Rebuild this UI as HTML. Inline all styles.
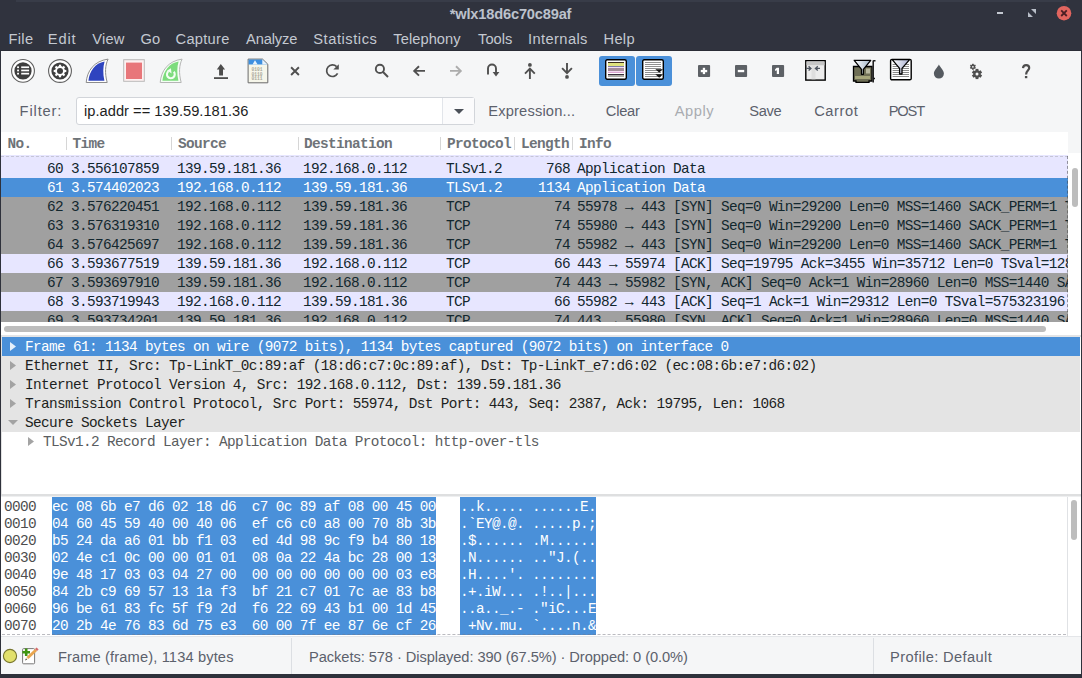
<!DOCTYPE html><html><head><meta charset="utf-8"><title>wlx18d6c70c89af</title><style>
*{margin:0;padding:0;box-sizing:border-box}
html,body{width:1082px;height:678px;overflow:hidden}
body{position:relative;background:#f5f6f7;font-family:"Liberation Sans", sans-serif;}
.a{position:absolute}
.t{position:absolute;white-space:pre;line-height:1}
.m{font-family:"Liberation Mono", monospace;font-size:14.4px;letter-spacing:-0.641px;white-space:pre}
.menu{position:absolute;top:33px;font-size:14.67px;color:#cfd4db;white-space:pre;line-height:1}
.fb{position:absolute;top:104px;font-size:14.67px;color:#5c616c;white-space:pre;line-height:1}
.row{position:absolute;left:1px;width:1067px;height:19px;overflow:hidden;color:#12272e}
.row span{position:absolute;top:3px;font-family:"Liberation Mono", monospace;font-size:14.4px;letter-spacing:-0.641px;white-space:pre;line-height:1}
.hdr span{position:absolute;top:137px;font-family:"Liberation Mono", monospace;font-size:14.4px;letter-spacing:-0.641px;font-weight:bold;color:#6e7378;white-space:pre;line-height:1}
.sep{position:absolute;top:137px;width:1px;height:13px;background:#d6d6d6}
.tr{position:absolute;left:2px;width:1078px;height:19px;color:#1d1f21}
.tr span{position:absolute;top:3px;font-family:"Liberation Mono", monospace;font-size:14.4px;letter-spacing:-0.641px;white-space:pre;line-height:1}
.bl{position:absolute;left:4px;font-family:"Liberation Mono", monospace;font-size:14.4px;letter-spacing:-0.641px;white-space:pre;line-height:1;color:#4d4d4d}
.st{position:absolute;top:650px;font-size:14.67px;color:#5c616c;white-space:pre;line-height:1}
</style></head><body>
<div class="a" style="left:0;top:0;width:1082px;height:51px;background:#30333e"></div>
<div class="a" style="left:16px;top:0;width:1050px;height:2px;background:#383c48"></div>
<div class="a" style="left:0;top:50px;width:1082px;height:1px;background:#2a2d36"></div>
<div class="t" style="left:449.80px;top:6.70px;font-size:14.67px;font-weight:bold;color:#bcc2cc;letter-spacing:-0.200px;">*wlx18d6c70c89af</div>
<div class="a" style="left:997px;top:12px;width:6px;height:2px;background:#c3c8d0"></div>
<svg class="a" style="left:1028px;top:9px" width="8" height="8" viewBox="0 0 8 8"><path d="M3 0H8V5Z M0 3V8H5Z" fill="#b8bec8"/></svg>
<svg class="a" style="left:1056px;top:5px" width="16" height="16" viewBox="0 0 16 16"><circle cx="8" cy="8.2" r="7.3" fill="#e1655f"/><path d="M5.2 5.4L10.8 11M10.8 5.4L5.2 11" stroke="#4a1f24" stroke-width="1.8"/></svg>
<div class="t" style="left:8.50px;top:31.70px;font-size:14.67px;font-weight:normal;color:#c4c9d1;letter-spacing:0.333px;">File</div>
<div class="t" style="left:47.80px;top:31.70px;font-size:14.67px;font-weight:normal;color:#c4c9d1;letter-spacing:0.867px;">Edit</div>
<div class="t" style="left:92.30px;top:31.70px;font-size:14.67px;font-weight:normal;color:#c4c9d1;letter-spacing:0.167px;">View</div>
<div class="t" style="left:140.40px;top:31.70px;font-size:14.67px;font-weight:normal;color:#c4c9d1;letter-spacing:0.300px;">Go</div>
<div class="t" style="left:175.60px;top:31.70px;font-size:14.67px;font-weight:normal;color:#c4c9d1;letter-spacing:0.267px;">Capture</div>
<div class="t" style="left:246.00px;top:31.70px;font-size:14.67px;font-weight:normal;color:#c4c9d1;letter-spacing:-0.133px;">Analyze</div>
<div class="t" style="left:313.30px;top:31.70px;font-size:14.67px;font-weight:normal;color:#c4c9d1;letter-spacing:0.544px;">Statistics</div>
<div class="t" style="left:393.30px;top:31.70px;font-size:14.67px;font-weight:normal;color:#c4c9d1;letter-spacing:0.062px;">Telephony</div>
<div class="t" style="left:478.10px;top:31.70px;font-size:14.67px;font-weight:normal;color:#c4c9d1;letter-spacing:-0.025px;">Tools</div>
<div class="t" style="left:528.00px;top:31.70px;font-size:14.67px;font-weight:normal;color:#c4c9d1;letter-spacing:0.400px;">Internals</div>
<div class="t" style="left:603.50px;top:31.70px;font-size:14.67px;font-weight:normal;color:#c4c9d1;letter-spacing:0.300px;">Help</div>
<div class="a" style="left:0;top:51px;width:1px;height:627px;background:#2e313b"></div>
<div class="a" style="left:1081px;top:51px;width:1px;height:627px;background:#2e313b"></div>
<div class="a" style="left:0;top:674px;width:1082px;height:4px;background:#2e313b"></div>
<svg class="a" style="left:10px;top:58px" width="26" height="26" viewBox="0 0 26 26"><circle cx="13" cy="12.9" r="11.4" fill="#fff" stroke="#5f5f5f" stroke-width="1.1"/><circle cx="13" cy="12.9" r="8.6" fill="#3e3e3e"/><g fill="#fff"><rect x="7.1" y="8.4" width="1.9" height="1.7"/><rect x="7.1" y="11.6" width="1.9" height="1.7"/><rect x="7.1" y="14.8" width="1.9" height="1.7"/><rect x="11.2" y="8.4" width="7.9" height="1.7"/><rect x="11.2" y="11.6" width="7.9" height="1.7"/><rect x="11.2" y="14.8" width="7.9" height="1.7"/></g></svg>
<svg class="a" style="left:47px;top:58px" width="26" height="26" viewBox="0 0 26 26"><circle cx="13" cy="13" r="11.4" fill="#fff" stroke="#5f5f5f" stroke-width="1.1"/><circle cx="13" cy="13" r="8.6" fill="#3e3e3e"/><g transform="translate(13 13)" fill="#fff"><circle r="4.9"/><rect x="-1.1" y="-6.3" width="2.2" height="3" transform="rotate(0)"/><rect x="-1.1" y="-6.3" width="2.2" height="3" transform="rotate(45)"/><rect x="-1.1" y="-6.3" width="2.2" height="3" transform="rotate(90)"/><rect x="-1.1" y="-6.3" width="2.2" height="3" transform="rotate(135)"/><rect x="-1.1" y="-6.3" width="2.2" height="3" transform="rotate(180)"/><rect x="-1.1" y="-6.3" width="2.2" height="3" transform="rotate(225)"/><rect x="-1.1" y="-6.3" width="2.2" height="3" transform="rotate(270)"/><rect x="-1.1" y="-6.3" width="2.2" height="3" transform="rotate(315)"/><circle r="3" fill="#3e3e3e"/></g></svg>
<svg class="a" style="left:84px;top:57px" width="27" height="28" viewBox="0 0 27 28"><path d="M2.2 25.5 C3 14 10 4 24.1 2.1 C21.2 8 20.6 16 23.2 25.5 Z" fill="#fff" stroke="#8c8c8c" stroke-width="1"/><path d="M4.4 23.7 C5.4 14.5 11 6.2 20.6 4.6 C19 10 18.8 17 20.4 23.7 Z" fill="#2e44bf"/></svg>
<svg class="a" style="left:122px;top:58px" width="24" height="25" viewBox="0 0 24 25"><rect x="1.7" y="1.7" width="20.6" height="21.6" fill="#fdf0f0" stroke="#b9b9b9" stroke-width="1"/><rect x="4" y="4.6" width="16" height="16.4" fill="#e8767a"/></svg>
<svg class="a" style="left:158px;top:57px" width="27" height="28" viewBox="0 0 27 28"><path d="M2.2 25.5 C3 14 10 4 24.1 2.1 C21.2 8 20.6 16 23.2 25.5 Z" fill="#f4fff4" stroke="#b5b5b5" stroke-width="1"/><path d="M4.4 23.7 C5.4 14.5 11 6.2 20.6 4.6 C19 10 18.8 17 20.4 23.7 Z" fill="#7ddc7d"/><path d="M10.6 14.2 A3.9 3.9 0 1 0 15.8 14.8" fill="none" stroke="#f2fff2" stroke-width="2.1"/><path d="M12.9 11.2 L13.6 16.4 L9.2 13.6 Z" fill="#f2fff2"/></svg>
<svg class="a" style="left:212px;top:62px" width="18" height="19" viewBox="0 0 18 19"><path d="M8.8 2.1 L13.1 7.5 H11 V13.6 H7.1 V7.5 H4.8 Z" fill="#4d4d4d"/><rect x="2" y="15.2" width="14" height="1.8" fill="#4d4d4d"/></svg>
<svg class="a" style="left:247px;top:58px" width="22" height="26" viewBox="0 0 22 26"><path d="M1.1 1.1 H15.5 L20.8 6.2 V24.8 H1.1 Z" fill="#f6f6ea" stroke="#6a6a6a" stroke-width="1"/><path d="M1.6 1.6 H15.3 L20.3 6.4 H1.6 Z" fill="#3d8fe0"/><path d="M5.5 6.6 L8 2.2 L10.6 6.6 Z M15.3 1.6 V6.4 H20.3 Z" fill="#e8f2fb"/><g fill="#a9a99a" font-family="Liberation Mono" font-size="4.6" font-weight="bold"><text x="4.4" y="12.6">0101</text><text x="4.4" y="17.6">0110</text><text x="4.4" y="22.4">0111</text></g></svg>
<svg class="a" style="left:289px;top:65px" width="12" height="12" viewBox="0 0 12 12"><path d="M2.1 2.3 L9.9 10 M9.9 2.3 L2.1 10" stroke="#505050" stroke-width="1.9"/></svg>
<svg class="a" style="left:323px;top:62px" width="18" height="18" viewBox="0 0 18 18"><path d="M14.6 11.4 A5.8 5.8 0 1 1 13.6 4.6" fill="none" stroke="#505050" stroke-width="1.7"/><path d="M15.8 2.2 V7.6 H10.3 Z" fill="#505050"/></svg>
<svg class="a" style="left:373px;top:62px" width="18" height="18" viewBox="0 0 18 18"><circle cx="6.9" cy="6.9" r="4.1" fill="none" stroke="#505050" stroke-width="1.9"/><path d="M9.8 9.8 L15 15" stroke="#505050" stroke-width="2"/></svg>
<svg class="a" style="left:411px;top:63px" width="16" height="16" viewBox="0 0 16 16"><path d="M14 7.9 H3.5 M8 3.2 L3.2 7.9 L8 12.6" fill="none" stroke="#505050" stroke-width="1.9"/></svg>
<svg class="a" style="left:448px;top:63px" width="16" height="16" viewBox="0 0 16 16"><path d="M2 7.9 H12.5 M8 3.2 L12.8 7.9 L8 12.6" fill="none" stroke="#acacac" stroke-width="1.9"/></svg>
<svg class="a" style="left:485px;top:62px" width="16" height="16" viewBox="0 0 16 16"><path d="M3 12.6 V6.5 A4 4 0 0 1 11 6.5 V10.5" fill="none" stroke="#505050" stroke-width="1.9"/><path d="M7.6 10 H14.4 L11 14.4 Z" fill="#505050"/></svg>
<svg class="a" style="left:522px;top:61px" width="16" height="20" viewBox="0 0 16 20"><circle cx="7.9" cy="3.9" r="1.9" fill="#505050"/><path d="M7.9 8 V17.9 M3 12.6 L7.9 7.7 L12.8 12.6" fill="none" stroke="#505050" stroke-width="1.9"/></svg>
<svg class="a" style="left:559px;top:61px" width="16" height="20" viewBox="0 0 16 20"><circle cx="8" cy="15.9" r="1.9" fill="#505050"/><path d="M8 2 V12 M3.1 7.2 L8 12.1 L12.9 7.2" fill="none" stroke="#505050" stroke-width="1.9"/></svg>
<div class="a" style="left:599px;top:56px;width:36px;height:30px;border-radius:3px;background:#4a90d9"></div>
<div class="a" style="left:636px;top:56px;width:36px;height:30px;border-radius:3px;background:#4a90d9"></div>
<svg class="a" style="left:605px;top:59px" width="22" height="21" viewBox="0 0 22 21"><rect x="0.7" y="0.7" width="20.6" height="19.6" rx="1.5" fill="#fff" stroke="#000" stroke-width="1.4"/><rect x="3" y="3.0" width="16" height="1" fill="#3b2c1c"/><rect x="3" y="4.0" width="16" height="3" fill="#dfe27e"/><rect x="3" y="7.0" width="16" height="1" fill="#7f7ca6"/><rect x="3" y="8.0" width="16" height="1" fill="#f1ddf4"/><rect x="3" y="9.0" width="16" height="3" fill="#a38d98"/><rect x="3" y="12.0" width="16" height="1" fill="#f3d8f0"/><rect x="3" y="13.0" width="16" height="1" fill="#d9a6d0"/><rect x="3" y="15.0" width="16" height="1" fill="#382e3c"/><rect x="3" y="16.0" width="16" height="2" fill="#a9a9a3"/></svg>
<svg class="a" style="left:642px;top:59px" width="22" height="21" viewBox="0 0 22 21"><rect x="0.7" y="0.7" width="20.6" height="19.6" rx="1.5" fill="#fff" stroke="#000" stroke-width="1.4"/><rect x="3" y="3" width="16" height="1" fill="#8e8e8e"/><rect x="3" y="5" width="16" height="1" fill="#8e8e8e"/><rect x="3" y="7" width="16" height="1" fill="#8e8e8e"/><rect x="3" y="9" width="16" height="1" fill="#8e8e8e"/><rect x="3" y="11" width="16" height="1" fill="#8e8e8e"/><rect x="3" y="13" width="16" height="1" fill="#8e8e8e"/><rect x="3" y="15" width="16" height="1" fill="#8e8e8e"/><rect x="3" y="17" width="16" height="1" fill="#8e8e8e"/><path d="M13.3 10.2 H21 L17.2 13.5 Z M13.3 15.2 H21 L17.2 18.7 Z" fill="#111"/></svg>
<svg class="a" style="left:698px;top:64px" width="13" height="14" viewBox="0 0 13 14"><rect x="0" y="0.9" width="12.1" height="12.1" rx="1" fill="#5d6166"/><rect x="2.8" y="5.9" width="6.4" height="2.3" fill="#fff"/><rect x="4.8" y="3.8" width="2.3" height="6.3" fill="#fff"/></svg>
<svg class="a" style="left:735px;top:64px" width="13" height="14" viewBox="0 0 13 14"><rect x="0" y="0.9" width="12.1" height="12.1" rx="1" fill="#5d6166"/><rect x="2.8" y="5.9" width="6.4" height="2.3" fill="#fff"/></svg>
<svg class="a" style="left:772px;top:64px" width="13" height="14" viewBox="0 0 13 14"><rect x="0" y="0.9" width="12.1" height="12.1" rx="1" fill="#5d6166"/><path d="M4.7 3.8 H7 V10.1 H4.8 V6.3 L3.1 6.9 V5.2 Z" fill="#fff"/></svg>
<svg class="a" style="left:804px;top:59px" width="23" height="23" viewBox="0 0 23 23"><rect x="1.8" y="1.7" width="19.4" height="19.4" fill="#ececec" stroke="#000" stroke-width="1.4"/><rect x="2.5" y="2.4" width="18" height="3.9" fill="#c6c6c6"/><rect x="7.5" y="6.3" width="4" height="14" fill="#dedede"/><path d="M2.3 9.4 H6.4 M4.6 7.3 L6.9 9.4 L4.6 11.5 M16 9.4 H12 M13.8 7.3 L11.5 9.4 L13.8 11.5" fill="none" stroke="#4e5560" stroke-width="1.4"/></svg>
<svg class="a" style="left:852px;top:59px" width="26" height="25" viewBox="0 0 26 25"><path d="M1.5 7.5 H20 V22 H17 V23.3 H4 V22 H1.5 Z" fill="#6e6e55" stroke="#000" stroke-width="1.3"/><rect x="3" y="17" width="15" height="3" fill="#a5a57a"/><rect x="14" y="9.5" width="4" height="5" fill="#b8b8a0"/><path d="M21.2 1.5 V23.5 M21.2 1.8 H23.5 M21.2 19.5 H23" fill="none" stroke="#1a1a1a" stroke-width="1.5"/><defs><linearGradient id="fg1" x1="0" y1="0" x2="1" y2="0"><stop offset="0" stop-color="#ffffff"/><stop offset="1" stop-color="#9fb3c8"/></linearGradient></defs><path d="M2.2 1.3 H18.7 L11.4 10.3 V15.3 H9.5 V10.3 Z" fill="url(#fg1)" stroke="#000" stroke-width="1.3" stroke-linejoin="round"/></svg>
<svg class="a" style="left:889px;top:58px" width="24" height="23" viewBox="0 0 24 23"><rect x="1.6" y="1.4" width="20.6" height="20.4" rx="1.4" fill="#fff" stroke="#000" stroke-width="1.4"/><rect x="3.6" y="6" width="16.4" height="1" fill="#8a8a8a"/><rect x="3.6" y="8" width="16.4" height="1" fill="#8a8a8a"/><rect x="3.6" y="10" width="16.4" height="1" fill="#8a8a8a"/><rect x="3.6" y="12" width="16.4" height="1" fill="#8a8a8a"/><rect x="3.6" y="14" width="16.4" height="1" fill="#8a8a8a"/><rect x="3.6" y="16" width="16.4" height="1" fill="#8a8a8a"/><rect x="3.6" y="18" width="16.4" height="1" fill="#8a8a8a"/><defs><linearGradient id="fg2" x1="0" y1="0" x2="1" y2="0"><stop offset="0" stop-color="#ffffff"/><stop offset="1" stop-color="#a7aed0"/></linearGradient></defs><path d="M3.2 1.6 H20.6 L13 10.4 V16 H10.6 V10.4 Z" fill="url(#fg2)" stroke="#000" stroke-width="1.3" stroke-linejoin="round"/></svg>
<svg class="a" style="left:932px;top:63px" width="14" height="16" viewBox="0 0 14 16"><path d="M6.9 1.5 C8.5 4.5 11.9 7.5 11.9 10.6 A5 5 0 0 1 1.9 10.6 C1.9 7.5 5.3 4.5 6.9 1.5 Z" fill="#555a60"/></svg>
<svg class="a" style="left:966px;top:62px" width="20" height="19" viewBox="0 0 20 19"><g transform="translate(6.9 4.8)" fill="#4f4f4f"><circle r="2.2"/><rect x="-0.84" y="-3.00" width="1.68" height="1.60" transform="rotate(0)"/><rect x="-0.84" y="-3.00" width="1.68" height="1.60" transform="rotate(60)"/><rect x="-0.84" y="-3.00" width="1.68" height="1.60" transform="rotate(120)"/><rect x="-0.84" y="-3.00" width="1.68" height="1.60" transform="rotate(180)"/><rect x="-0.84" y="-3.00" width="1.68" height="1.60" transform="rotate(240)"/><rect x="-0.84" y="-3.00" width="1.68" height="1.60" transform="rotate(300)"/><circle r="0.9" fill="#f5f6f7"/></g><g transform="translate(11 12)" fill="#4f4f4f"><circle r="3.8"/><rect x="-1.43" y="-5.10" width="2.86" height="2.10" transform="rotate(0)"/><rect x="-1.43" y="-5.10" width="2.86" height="2.10" transform="rotate(60)"/><rect x="-1.43" y="-5.10" width="2.86" height="2.10" transform="rotate(120)"/><rect x="-1.43" y="-5.10" width="2.86" height="2.10" transform="rotate(180)"/><rect x="-1.43" y="-5.10" width="2.86" height="2.10" transform="rotate(240)"/><rect x="-1.43" y="-5.10" width="2.86" height="2.10" transform="rotate(300)"/><circle r="1.5" fill="#f5f6f7"/></g></svg>
<svg class="a" style="left:1018px;top:63px" width="16" height="18" viewBox="0 0 16 18"><path d="M5 5.2 C5.2 3 6.5 2.1 8.1 2.1 C9.8 2.1 11.2 3.2 11.2 5 C11.2 7.4 8.1 8 8.1 11.4" fill="none" stroke="#4d4d4d" stroke-width="2.2"/><rect x="6.9" y="13" width="2.4" height="2.2" fill="#4d4d4d"/></svg>
<div class="t" style="left:19.60px;top:104.10px;font-size:14.67px;font-weight:normal;color:#5c616c;letter-spacing:0.867px;">Filter:</div>
<div class="a" style="left:76px;top:97px;width:399px;height:28px;background:#fff;border:1px solid #d2d5da;border-radius:3px"></div>
<div class="a" style="left:442px;top:98px;width:1px;height:26px;background:#e2e5ea"></div>
<div class="a" style="left:443px;top:98px;width:31px;height:26px;background:#fbfbfc"></div>
<svg class="a" style="left:453px;top:108px" width="12" height="7" viewBox="0 0 12 7"><path d="M1 1H11L6 6Z" fill="#4b5058"/></svg>
<div class="t" style="left:84.00px;top:104.10px;font-size:14.67px;font-weight:normal;color:#1e1e1e;letter-spacing:0.026px;">ip.addr == 139.59.181.36</div>
<div class="t" style="left:488.30px;top:104.10px;font-size:14.67px;font-weight:normal;color:#5c616c;letter-spacing:0.167px;">Expression...</div>
<div class="t" style="left:605.80px;top:104.10px;font-size:14.67px;font-weight:normal;color:#5c616c;letter-spacing:-0.225px;">Clear</div>
<div class="t" style="left:674.70px;top:104.10px;font-size:14.67px;font-weight:normal;color:#a9acb1;letter-spacing:0.575px;">Apply</div>
<div class="t" style="left:749.20px;top:104.10px;font-size:14.67px;font-weight:normal;color:#5c616c;letter-spacing:-0.333px;">Save</div>
<div class="t" style="left:814.20px;top:104.10px;font-size:14.67px;font-weight:normal;color:#5c616c;letter-spacing:0.560px;">Carrot</div>
<div class="t" style="left:888.80px;top:104.10px;font-size:14.67px;font-weight:normal;color:#5c616c;letter-spacing:-1.200px;">POST</div>
<div class="a" style="left:1px;top:132px;width:1080px;height:203px;background:#fff"></div>
<div class="a" style="left:1px;top:132px;width:1067px;height:190px;overflow:hidden">
<div class="row" style="left:0;top:8px;background:#e7e6ff;color:#12272e">
<span style="left:46.0px">59</span>
<span style="left:70px"></span>
<span style="left:176px"></span>
<span style="left:302px"></span>
<span style="left:445px"></span>
<span style="left:569.0px"></span>
<span style="left:576px"></span>
</div>
<div class="row" style="left:0;top:27px;background:#e7e6ff;color:#12272e">
<span style="left:46.0px">60</span>
<span style="left:70px">3.556107859</span>
<span style="left:176px">139.59.181.36</span>
<span style="left:302px">192.168.0.112</span>
<span style="left:445px">TLSv1.2</span>
<span style="left:545.0px">768</span>
<span style="left:576px">Application Data</span>
</div>
<div class="row" style="left:0;top:46px;background:#4a90d9;color:#ffffff">
<span style="left:46.0px">61</span>
<span style="left:70px">3.574402023</span>
<span style="left:176px">192.168.0.112</span>
<span style="left:302px">139.59.181.36</span>
<span style="left:445px">TLSv1.2</span>
<span style="left:537.0px">1134</span>
<span style="left:576px">Application Data</span>
</div>
<div class="row" style="left:0;top:65px;background:#a0a0a0;color:#12272e">
<span style="left:46.0px">62</span>
<span style="left:70px">3.576220451</span>
<span style="left:176px">192.168.0.112</span>
<span style="left:302px">139.59.181.36</span>
<span style="left:445px">TCP</span>
<span style="left:553.0px">74</span>
<span style="left:576px">55978 → 443 [SYN] Seq=0 Win=29200 Len=0 MSS=1460 SACK_PERM=1 TSval=575323182 TSecr=0 WS=128</span>
</div>
<div class="row" style="left:0;top:84px;background:#a0a0a0;color:#12272e">
<span style="left:46.0px">63</span>
<span style="left:70px">3.576319310</span>
<span style="left:176px">192.168.0.112</span>
<span style="left:302px">139.59.181.36</span>
<span style="left:445px">TCP</span>
<span style="left:553.0px">74</span>
<span style="left:576px">55980 → 443 [SYN] Seq=0 Win=29200 Len=0 MSS=1460 SACK_PERM=1 TSval=575323182 TSecr=0 WS=128</span>
</div>
<div class="row" style="left:0;top:103px;background:#a0a0a0;color:#12272e">
<span style="left:46.0px">64</span>
<span style="left:70px">3.576425697</span>
<span style="left:176px">192.168.0.112</span>
<span style="left:302px">139.59.181.36</span>
<span style="left:445px">TCP</span>
<span style="left:553.0px">74</span>
<span style="left:576px">55982 → 443 [SYN] Seq=0 Win=29200 Len=0 MSS=1460 SACK_PERM=1 TSval=575323182 TSecr=0 WS=128</span>
</div>
<div class="row" style="left:0;top:122px;background:#e7e6ff;color:#12272e">
<span style="left:46.0px">66</span>
<span style="left:70px">3.593677519</span>
<span style="left:176px">139.59.181.36</span>
<span style="left:302px">192.168.0.112</span>
<span style="left:445px">TCP</span>
<span style="left:553.0px">66</span>
<span style="left:576px">443 → 55974 [ACK] Seq=19795 Ack=3455 Win=35712 Len=0 TSval=1282746 TSecr=575323164</span>
</div>
<div class="row" style="left:0;top:141px;background:#a0a0a0;color:#12272e">
<span style="left:46.0px">67</span>
<span style="left:70px">3.593697910</span>
<span style="left:176px">139.59.181.36</span>
<span style="left:302px">192.168.0.112</span>
<span style="left:445px">TCP</span>
<span style="left:553.0px">74</span>
<span style="left:576px">443 → 55982 [SYN, ACK] Seq=0 Ack=1 Win=28960 Len=0 MSS=1440 SACK_PERM=1</span>
</div>
<div class="row" style="left:0;top:160px;background:#e7e6ff;color:#12272e">
<span style="left:46.0px">68</span>
<span style="left:70px">3.593719943</span>
<span style="left:176px">192.168.0.112</span>
<span style="left:302px">139.59.181.36</span>
<span style="left:445px">TCP</span>
<span style="left:553.0px">66</span>
<span style="left:576px">55982 → 443 [ACK] Seq=1 Ack=1 Win=29312 Len=0 TSval=575323196 TSecr=1282748</span>
</div>
<div class="row" style="left:0;top:179px;background:#a0a0a0;color:#12272e">
<span style="left:46.0px">69</span>
<span style="left:70px">3.593734201</span>
<span style="left:176px">139.59.181.36</span>
<span style="left:302px">192.168.0.112</span>
<span style="left:445px">TCP</span>
<span style="left:553.0px">74</span>
<span style="left:576px">443 → 55980 [SYN, ACK] Seq=0 Ack=1 Win=28960 Len=0 MSS=1440 SACK_PERM=1</span>
</div>
</div>
<div class="a hdr" style="left:1px;top:132px;width:1067px;height:23px;background:#fff"></div>
<div class="hdr">
<span style="left:7.5px">No.</span>
<span style="left:72.5px">Time</span>
<span style="left:178px">Source</span>
<span style="left:304px">Destination</span>
<span style="left:447px">Protocol</span>
<span style="left:521px">Length</span>
<span style="left:579px">Info</span>
</div>
<div class="sep" style="left:66px"></div>
<div class="sep" style="left:171px"></div>
<div class="sep" style="left:298px"></div>
<div class="sep" style="left:440px"></div>
<div class="sep" style="left:514px"></div>
<div class="sep" style="left:572px"></div>
<div class="a" style="left:1px;top:156px;width:1067px;height:0;border-top:1px dashed rgba(110,110,110,0.28)"></div>
<div class="a" style="left:1067px;top:156px;width:0;height:166px;border-left:1px dashed rgba(60,60,60,0.5)"></div>
<div class="a" style="left:1068px;top:132px;width:13px;height:21px;background:#f5f6f7"></div>
<div class="a" style="left:4px;top:326px;width:1042px;height:6px;border-radius:3px;background:#bdbdbd"></div>
<div class="a" style="left:1072px;top:168px;width:6px;height:39px;border-radius:3px;background:#bdbdbd"></div>
<div class="a" style="left:1px;top:335px;width:1080px;height:2px;background:#e3e4e6"></div>
<div class="a" style="left:1px;top:337px;width:1080px;height:157px;background:#fff"></div>
<div class="a" style="left:2px;top:356px;width:1078px;height:76px;background:#e4e4e4"></div>
<div class="a" style="left:1px;top:337px;width:1px;height:157px;background:#e2e2e2"></div>
<div class="tr" style="top:337px;background:#4a90d9;color:#ffffff">
<svg class="a" style="left:8px;top:5px" width="8" height="10" viewBox="0 0 8 10"><path d="M0 0L6 4.5L0 9Z" fill="#e6f0fa"/></svg>
<span style="left:23px">Frame 61: 1134 bytes on wire (9072 bits), 1134 bytes captured (9072 bits) on interface 0</span>
</div>
<div class="tr" style="top:356px;background:transparent;color:#1d1f21">
<svg class="a" style="left:8px;top:5px" width="8" height="10" viewBox="0 0 8 10"><path d="M0 0L6 4.5L0 9Z" fill="#a3a3a3"/></svg>
<span style="left:23px">Ethernet II, Src: Tp-LinkT_0c:89:af (18:d6:c7:0c:89:af), Dst: Tp-LinkT_e7:d6:02 (ec:08:6b:e7:d6:02)</span>
</div>
<div class="tr" style="top:375px;background:transparent;color:#1d1f21">
<svg class="a" style="left:8px;top:5px" width="8" height="10" viewBox="0 0 8 10"><path d="M0 0L6 4.5L0 9Z" fill="#a3a3a3"/></svg>
<span style="left:23px">Internet Protocol Version 4, Src: 192.168.0.112, Dst: 139.59.181.36</span>
</div>
<div class="tr" style="top:394px;background:transparent;color:#1d1f21">
<svg class="a" style="left:8px;top:5px" width="8" height="10" viewBox="0 0 8 10"><path d="M0 0L6 4.5L0 9Z" fill="#a3a3a3"/></svg>
<span style="left:23px">Transmission Control Protocol, Src Port: 55974, Dst Port: 443, Seq: 2387, Ack: 19795, Len: 1068</span>
</div>
<div class="tr" style="top:413px;background:transparent;color:#1d1f21">
<svg class="a" style="left:6px;top:7px" width="12" height="8" viewBox="0 0 12 8"><path d="M0 0H10L5 5Z" fill="#a3a3a3"/></svg>
<span style="left:23px">Secure Sockets Layer</span>
</div>
<div class="tr" style="top:432px;background:transparent;color:#5a5d60">
<svg class="a" style="left:26px;top:5px" width="8" height="10" viewBox="0 0 8 10"><path d="M0 0L6 4.5L0 9Z" fill="#a3a3a3"/></svg>
<span style="left:41px">TLSv1.2 Record Layer: Application Data Protocol: http-over-tls</span>
</div>
<div class="a" style="left:1px;top:494px;width:1080px;height:2px;background:#dedfe0"></div><div class="a" style="left:1px;top:496px;width:1080px;height:1px;background:#eeeff0"></div>
<div class="a" style="left:1px;top:497px;width:1080px;height:139px;background:#fff"></div>
<div class="a" style="left:52px;top:497px;width:384px;height:138px;background:#4a90d9"></div>
<div class="a" style="left:460px;top:497px;width:136px;height:138px;background:#4a90d9"></div>
<div class="a" style="left:0;top:497px;width:1068px;height:138px;overflow:hidden">
<div class="bl" style="top:3px;left:4px">0000</div>
<div class="bl" style="top:3px;left:52px;color:#fff">ec 08 6b e7 d6 02 18 d6  c7 0c 89 af 08 00 45 00</div>
<div class="bl" style="top:3px;left:460px;color:#fff">..k..... ......E.</div>
<div class="bl" style="top:20px;left:4px">0010</div>
<div class="bl" style="top:20px;left:52px;color:#fff">04 60 45 59 40 00 40 06  ef c6 c0 a8 00 70 8b 3b</div>
<div class="bl" style="top:20px;left:460px;color:#fff">.`EY@.@. .....p.;</div>
<div class="bl" style="top:37px;left:4px">0020</div>
<div class="bl" style="top:37px;left:52px;color:#fff">b5 24 da a6 01 bb f1 03  ed 4d 98 9c f9 b4 80 18</div>
<div class="bl" style="top:37px;left:460px;color:#fff">.$...... .M......</div>
<div class="bl" style="top:54px;left:4px">0030</div>
<div class="bl" style="top:54px;left:52px;color:#fff">02 4e c1 0c 00 00 01 01  08 0a 22 4a bc 28 00 13</div>
<div class="bl" style="top:54px;left:460px;color:#fff">.N...... ..&quot;J.(..</div>
<div class="bl" style="top:71px;left:4px">0040</div>
<div class="bl" style="top:71px;left:52px;color:#fff">9e 48 17 03 03 04 27 00  00 00 00 00 00 00 03 e8</div>
<div class="bl" style="top:71px;left:460px;color:#fff">.H....&#x27;. ........</div>
<div class="bl" style="top:88px;left:4px">0050</div>
<div class="bl" style="top:88px;left:52px;color:#fff">84 2b c9 69 57 13 1a f3  bf 21 c7 01 7c ae 83 b8</div>
<div class="bl" style="top:88px;left:460px;color:#fff">.+.iW... .!..|...</div>
<div class="bl" style="top:105px;left:4px">0060</div>
<div class="bl" style="top:105px;left:52px;color:#fff">96 be 61 83 fc 5f f9 2d  f6 22 69 43 b1 00 1d 45</div>
<div class="bl" style="top:105px;left:460px;color:#fff">..a.._.- .&quot;iC...E</div>
<div class="bl" style="top:122px;left:4px">0070</div>
<div class="bl" style="top:122px;left:52px;color:#fff">20 2b 4e 76 83 6d 75 e3  60 00 7f ee 87 6e cf 26</div>
<div class="bl" style="top:122px;left:460px;color:#fff"> +Nv.mu. `....n.&amp;</div>
</div>
<div class="a" style="left:2px;top:634px;width:1064px;height:0;border-top:1px dashed rgba(120,120,130,0.5)"></div>
<div class="a" style="left:1067px;top:497px;width:1px;height:139px;background:#e0e2e5"></div>
<div class="a" style="left:1071px;top:500px;width:6px;height:40px;border-radius:3px;background:#bdbdbd"></div>
<div class="a" style="left:1px;top:636px;width:1080px;height:1px;background:#e4e6e9"></div>
<svg class="a" style="left:2px;top:648px" width="16" height="16" viewBox="0 0 16 16"><circle cx="8" cy="8" r="6.6" fill="#e2e06c" stroke="#77752e" stroke-width="1.1"/></svg>
<svg class="a" style="left:20px;top:646px" width="20" height="20" viewBox="0 0 20 20"><rect x="2.6" y="2.6" width="12" height="15.2" rx="1" fill="#fff" stroke="#7a7a7a" stroke-width="1"/><path d="M4.9 2.4 H7.5 V4.9 H10 V7.5 H7.5 V10 H4.9 V7.5 H2.4 V4.9 H4.9 Z" fill="#3f9410"/><path d="M6.47 10.91 L14.97 2.91 L17.03 5.09 L8.53 13.09 Z" fill="#e9a650"/><path d="M14.97 2.91 L16.6 1.4 L18.6 3.6 L17.03 5.09 Z" fill="#d46a6a"/><path d="M6.47 10.91 L8.53 13.09 L5.3 14.4 Z" fill="#f3e2c0"/><path d="M5.9 12.6 L6.9 13.6 L5.3 14.4 Z" fill="#111"/></svg>
<div class="t" style="left:57.90px;top:649.70px;font-size:14.67px;font-weight:normal;color:#5c616c;letter-spacing:0.133px;">Frame (frame), 1134 bytes</div>
<div class="a" style="left:291px;top:638px;width:1px;height:36px;background:#dcdfe3"></div>
<div class="t" style="left:309.00px;top:649.70px;font-size:14.67px;font-weight:normal;color:#5c616c;letter-spacing:-0.070px;">Packets: 578 · Displayed: 390 (67.5%) · Dropped: 0 (0.0%)</div>
<div class="a" style="left:873px;top:638px;width:1px;height:36px;background:#dcdfe3"></div>
<div class="t" style="left:890.00px;top:649.70px;font-size:14.67px;font-weight:normal;color:#5c616c;letter-spacing:0.380px;">Profile: Default</div>
</body></html>
